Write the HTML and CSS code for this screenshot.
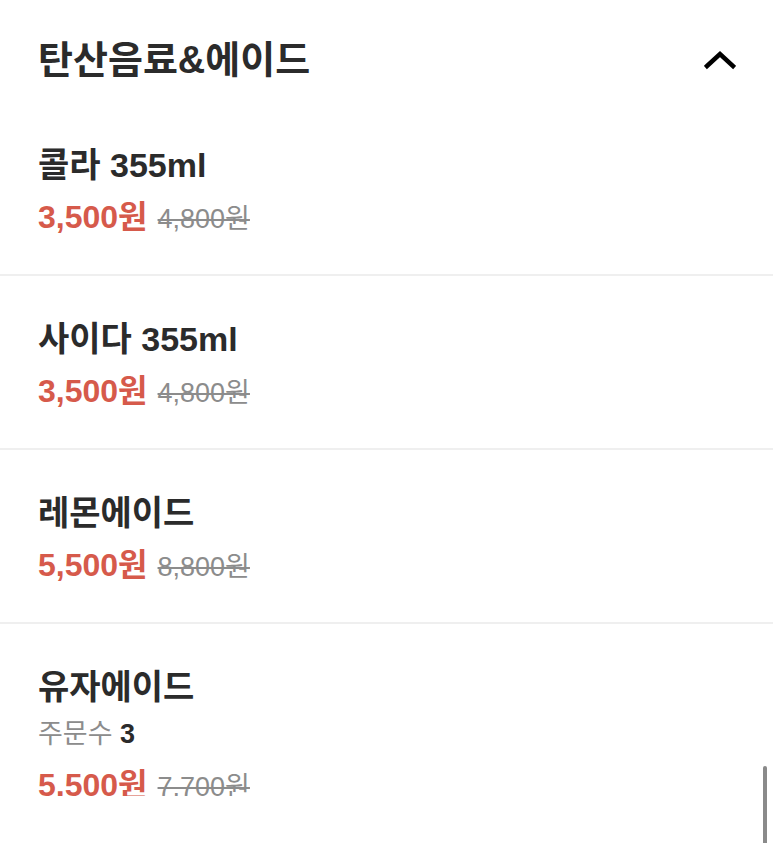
FILE: index.html
```html
<!DOCTYPE html>
<html lang="ko">
<head>
    <meta charset="UTF-8">
    <meta name="viewport" content="width=device-width, initial-scale=1.0">
    <title>탄산음료&amp;에이드</title>
    <link rel="stylesheet" href="styles.css">
</head>
<body>
    <div class="menu">
        <div class="menu-head">
            <h2 class="menu-title">탄산음료&amp;에이드</h2>
            <svg class="chevron" width="32" height="20" viewBox="0 0 32 20">
                <path d="M3 16 L16 4 L29 16" fill="none" stroke="#000" stroke-width="4.5" stroke-linejoin="miter" stroke-linecap="square"/>
            </svg>
        </div>

        <div class="item">
            <div class="item-name">콜라 355ml</div>
            <div class="item-price"><span class="sale">3,500원</span><span class="orig">4,800원</span></div>
        </div>
        <div class="item">
            <div class="item-name">사이다 355ml</div>
            <div class="item-price"><span class="sale">3,500원</span><span class="orig">4,800원</span></div>
        </div>
        <div class="item">
            <div class="item-name">레몬에이드</div>
            <div class="item-price"><span class="sale">5,500원</span><span class="orig">8,800원</span></div>
        </div>
        <div class="item last">
            <div class="item-name">유자에이드</div>
            <div class="item-count">주문수 <b>3</b></div>
            <div class="item-price"><span class="sale">5,500원</span><span class="orig">7,700원</span></div>
        </div>
    </div>
    <div class="scrollbar"></div>
</body>
</html>
```

FILE: styles.css
```css
body {
    margin: 0;
    background: #fff;
    color: #2b2b2b;
    font-family: "Liberation Sans", "Noto Sans CJK KR", sans-serif;
    overflow: hidden;
}
.menu {
    width: 773px;
}
.menu-head {
    height: 100px;
    margin-bottom: 2px;
    padding: 0 37px 0 38px;
    display: flex;
    align-items: center;
    justify-content: space-between;
    box-sizing: border-box;
}
.menu-title {
    margin: 0;
    font-size: 38px;
    font-weight: 700;
    line-height: 44px;
    padding-top: 20px;
}
.chevron {
    display: block;
    margin-top: 20px;
}
.item {
    height: 131px;
    padding: 41px 38px 0;
    border-bottom: 2px solid #efefef;
}
.item.last {
    border-bottom: none;
}
.item-name {
    height: 40px;
    font-size: 34px;
    font-weight: 600;
    line-height: 40px;
    padding-top: 2px;
}
.item-price {
    display: flex;
    align-items: baseline;
    height: 40px;
    margin-top: 12px;
    line-height: 40px;
}
.sale {
    color: #d65a4b;
    font-size: 32px;
    font-weight: 700;
    margin-right: 10px;
}
.orig {
    color: #8c8c8c;
    font-size: 27px;
    text-decoration: line-through;
}
.item-count {
    margin-top: 12px;
    height: 30px;
    font-size: 27px;
    line-height: 30px;
    color: #8c8c8c;
}
.item-count b {
    color: #2b2b2b;
}
.last .item-price {
    margin-top: 16px;
}
.scrollbar {
    position: absolute;
    left: 763px;
    top: 766px;
    width: 4px;
    height: 90px;
    border-radius: 2px;
    background: #8a8a8a;
}
```
